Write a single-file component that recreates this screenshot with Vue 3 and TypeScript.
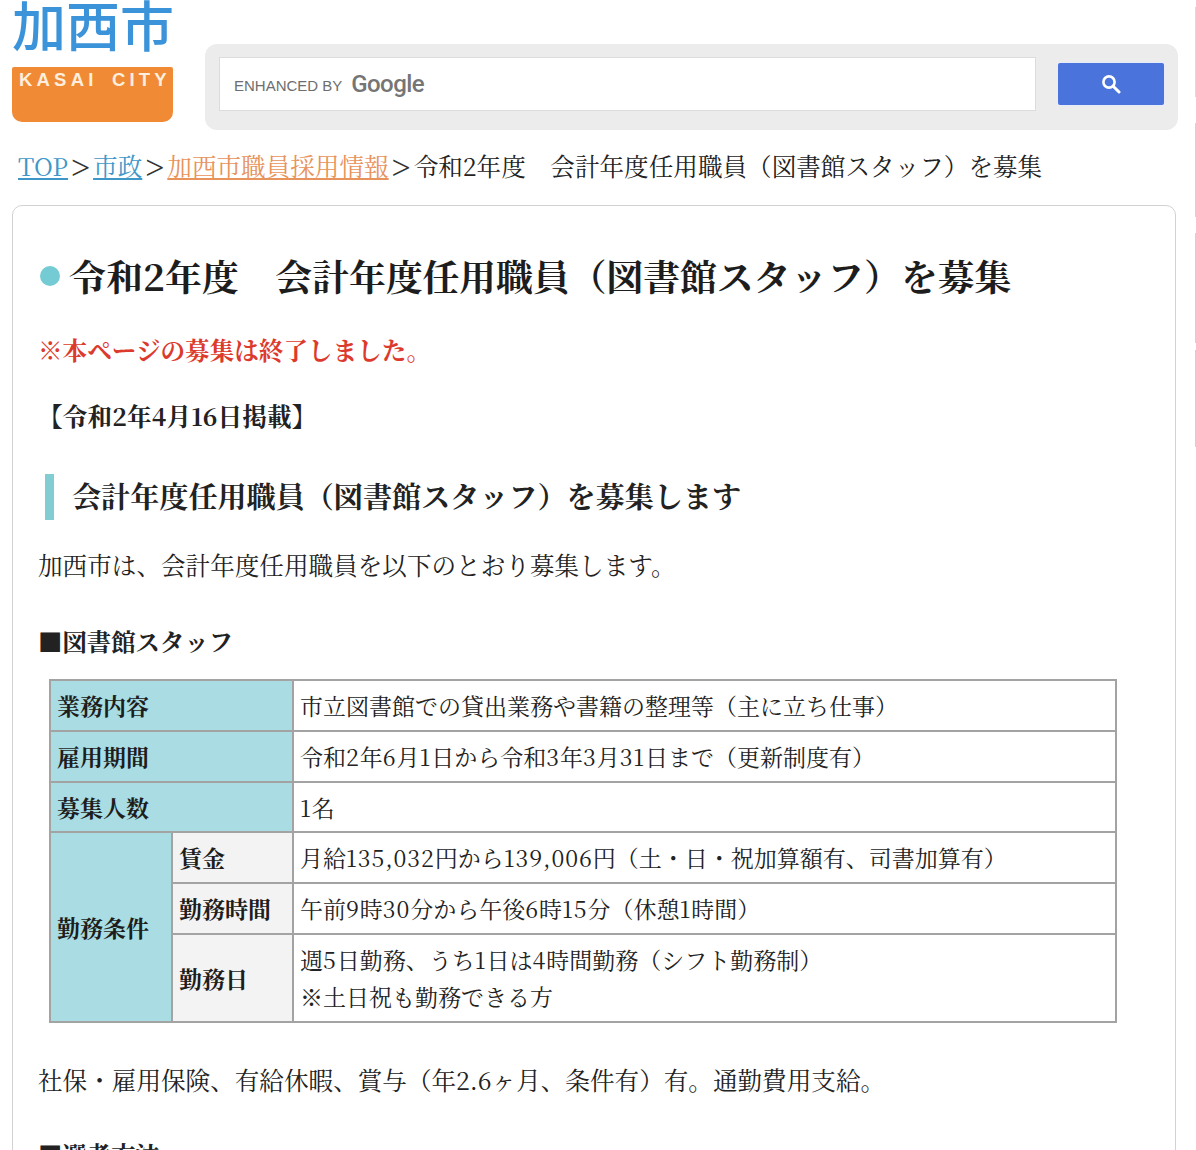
<script setup lang="ts">
interface Crumb { label: string; href?: string; tone?: string }
const crumbs: Crumb[] = [
  { label: 'TOP', href: '#', tone: 'blue' },
  { label: '市政', href: '#', tone: 'blue' },
  { label: '加西市職員採用情報', href: '#', tone: 'orange' },
  { label: '令和2年度　会計年度任用職員（図書館スタッフ）を募集' },
]
const strips = ['pink', 'green', 'amber', 'aqua']

interface Row { heads: { label: string; cls?: string; colspan?: number; rowspan?: number }[]; lines: string[] }
const rows: Row[] = [
  { heads: [{ label: '業務内容', colspan: 2 }], lines: ['市立図書館での貸出業務や書籍の整理等（主に立ち仕事）'] },
  { heads: [{ label: '雇用期間', colspan: 2 }], lines: ['令和2年6月1日から令和3年3月31日まで（更新制度有）'] },
  { heads: [{ label: '募集人数', colspan: 2 }], lines: ['1名'] },
  { heads: [{ label: '勤務条件', rowspan: 3 }, { label: '賃金', cls: 'sub' }], lines: ['月給135,032円から139,006円（土・日・祝加算額有、司書加算有）'] },
  { heads: [{ label: '勤務時間', cls: 'sub' }], lines: ['午前9時30分から午後6時15分（休憩1時間）'] },
  { heads: [{ label: '勤務日', cls: 'sub' }], lines: ['週5日勤務、うち1日は4時間勤務（シフト勤務制）', '※土日祝も勤務できる方'] },
]
const parts = (s: string): string[] => s.split(/(\d[\d,]*)/).filter(Boolean)
const isNum = (s: string): boolean => /^\d/.test(s)
</script>

<template>
  <div class="page">
    <header class="head">
      <div class="logo">
        <div class="logo-kanji">加西市</div>
        <div class="logo-badge">KASAI CITY</div>
      </div>
      <div class="search">
        <div class="search-input">
          <span class="enhanced">ENHANCED BY</span>
          <span class="google">Google</span>
        </div>
        <button class="search-btn" type="button" aria-label="検索">
          <svg width="20" height="20" viewBox="0 0 20 20">
            <circle cx="8" cy="8" r="5.6" fill="none" stroke="#fff" stroke-width="2.6" />
            <path d="M12.2 12.2 L18 18" stroke="#fff" stroke-width="3" stroke-linecap="round" />
          </svg>
        </button>
      </div>
    </header>

    <nav class="crumbs">
      <template v-for="(c, i) in crumbs" :key="i">
        <span v-if="i > 0" class="sep">&gt;</span>
        <a v-if="c.href" :href="c.href" :class="c.tone">{{ c.label }}</a>
        <span v-else>{{ c.label }}</span>
      </template>
    </nav>

    <main class="card">
      <h1><span class="dot"></span>令和2年度　会計年度任用職員（図書館スタッフ）を募集</h1>
      <p class="notice">※本ページの募集は終了しました。</p>
      <p class="date">【令和2年4月16日掲載】</p>
      <h2>会計年度任用職員（図書館スタッフ）を募集します</h2>
      <p class="lead">加西市は、会計年度任用職員を以下のとおり募集します。</p>
      <h3>■図書館スタッフ</h3>
      <table>
        <colgroup>
          <col class="c1" /><col class="c2" /><col />
        </colgroup>
        <tbody>
          <tr v-for="(r, i) in rows" :key="i" :class="{ r: r.lines.length === 1 }">
            <th v-for="h in r.heads" :key="h.label" :class="h.cls" :colspan="h.colspan" :rowspan="h.rowspan">{{ h.label }}</th>
            <td>
              <div v-for="(line, j) in r.lines" :key="j">
                <template v-for="(p, k) in parts(line)" :key="k">
                  <span v-if="isNum(p)" class="num">{{ p }}</span>
                  <template v-else>{{ p }}</template>
                </template>
              </div>
            </td>
          </tr>
        </tbody>
      </table>
      <p class="after">社保・雇用保険、有給休暇、賞与（年2.6ヶ月、条件有）有。通勤費用支給。</p>
      <h3 class="next">■選考方法</h3>
    </main>
    <div class="edge">
      <span v-for="s in strips" :key="s" :class="s"></span>
    </div>
  </div>
</template>

<style>
html, body { margin: 0; background: #fff; overflow: hidden; }
</style>

<style scoped>
.page {
  position: relative;
  width: 1196px;
  height: 1150px;
  overflow: hidden;
  background: #fff;
  color: #222;
  font-family: "Noto Serif CJK JP", "Liberation Serif", "Noto Sans CJK JP", serif;
  font-size: 24.6px;
}
.head { display: flex; align-items: flex-start; padding-left: 12px; height: 130px; }
.logo { width: 161px; flex: none; }
.logo-kanji {
  height: 67px;
  margin-top: -9px;
  font-family: "Noto Sans CJK JP", sans-serif;
  font-weight: 500;
  font-size: 54px;
  line-height: 66px;
  color: #3b93d9;
  white-space: nowrap;
}
.logo-badge {
  height: 55px;
  margin-top: 9px;
  box-sizing: border-box;
  padding: 1px 0 0 7px;
  background: #f08a34;
  border-radius: 2px 2px 10px 10px;
  color: #fdeedd;
  font-family: "Liberation Sans", sans-serif;
  font-weight: 700;
  font-size: 18.5px;
  line-height: 24px;
  letter-spacing: 4.2px;
  white-space: pre;
  word-spacing: 5px;
}
.search {
  margin: 44px 0 0 32px;
  width: 973px;
  height: 86px;
  box-sizing: border-box;
  padding: 13px 14px;
  display: flex;
  align-items: flex-start;
  justify-content: space-between;
  background: #ececec;
  border-radius: 12px;
}
.search-input {
  width: 817px;
  height: 54px;
  box-sizing: border-box;
  padding-left: 14px;
  display: flex;
  align-items: center;
  gap: 9px;
  background: #fff;
  border: 1px solid #dcdcdc;
}
.enhanced {
  font-family: "Liberation Sans", sans-serif;
  font-size: 15px;
  color: #6e6e6e;
  transform: translateY(1px);
}
.google {
  font-family: "Roboto", "Liberation Sans", sans-serif;
  font-size: 24px;
  font-weight: 500;
  color: #757575;
  letter-spacing: -0.6px;
}
.search-btn {
  margin-top: 6px;
  width: 106px;
  height: 42px;
  padding: 0;
  display: flex;
  align-items: center;
  justify-content: center;
  background: #4a74dc;
  border: none;
  border-radius: 2px;
  box-shadow: 0 0 0 1px #e8ecfa;
}
.crumbs {
  margin-top: 19px;
  padding-left: 18px;
  height: 33px;
  line-height: 33px;
  white-space: nowrap;
  color: #222;
}
.crumbs .sep {
  display: inline-block;
  width: 25px;
  text-align: center;
  color: #333;
  font-family: "Liberation Serif", serif;
  font-size: 34px;
  line-height: 30px;
  vertical-align: -3px;
}
.crumbs a.blue { color: #3f97c8; text-decoration: underline; }
.crumbs a.orange { color: #e8935b; text-decoration: underline; }
.card {
  margin: 23px 20px 0 12px;
  height: 1000px;
  box-sizing: border-box;
  border: 1.5px solid #d2d2d2;
  border-radius: 10px;
  padding: 0 25px;
}
h1, h2, h3, p { margin: 0; }
h1 {
  margin-top: 47px;
  display: flex;
  align-items: center;
  height: 46px;
  font-size: 36.8px;
  line-height: 46px;
  font-weight: 700;
  white-space: nowrap;
  color: #1d1d1d;
}
.dot {
  width: 20px;
  height: 20px;
  margin: 0 10px 0 1.5px;
  flex: none;
  border-radius: 50%;
  background: #74cbd3;
}
.notice { margin-top: 28px; height: 46px; line-height: 46px; font-weight: 700; color: #dc3a2c; }
.date { margin-top: 23px; height: 40px; line-height: 40px; font-weight: 700; letter-spacing: 0.15px; }
h2 {
  margin: 38px 0 0 6.5px;
  height: 46px;
  padding-left: 18.5px;
  border-left: 9px solid #82cdd2;
  font-size: 29.1px;
  line-height: 44px;
  font-weight: 700;
  white-space: nowrap;
}
.lead { margin-top: 25px; height: 40px; line-height: 40px; }
h3 { margin-top: 36px; height: 40px; font-size: 24.4px; line-height: 40px; font-weight: 700; }
table {
  margin: 18px 0 0 11px;
  width: 1068px;
  border-collapse: collapse;
  table-layout: fixed;
  font-size: 23px;
  line-height: 37px;
}
.c1 { width: 122px; }
.c2 { width: 121px; }
th, td { border: 2px solid #a3a3a3; padding: 0 6px; text-align: left; vertical-align: middle; }
th { background: #a9dde3; font-weight: 700; color: #1d1d1d; }
th.sub { background: #f3f3f3; }
td { background: #fff; }
tr.r { height: 51px; }
tr.r:nth-child(3) { height: 50px; }
tr:last-child { height: 88px; }
.num { letter-spacing: 0.9px; }
.after { margin-top: 37px; height: 40px; line-height: 40px; }
.next { margin-top: 34px; }
.edge {
  position: absolute;
  top: 7px;
  right: 0;
  width: 1px;
  display: flex;
  flex-direction: column;
}
.edge span { display: block; }
.pink { height: 90px; background: #f8ccd4; }
.green { height: 94px; margin-top: 26px; background: #b4e6b8; }
.amber { height: 110px; margin-top: 16px; background: #f5ca98; }
.aqua { height: 97px; margin-top: 7px; background: #aadeea; }
</style>
